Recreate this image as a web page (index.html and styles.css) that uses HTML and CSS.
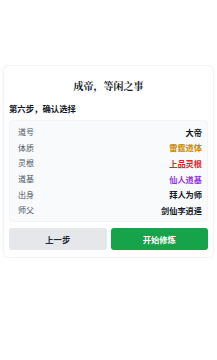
FILE: index.html
```html
<!DOCTYPE html>
<html>
<head>
    <meta charset="utf-8">
    <title>成帝，等闲之事</title>
    <link rel="stylesheet" href="styles.css">
</head>
<body>
    <div class="card">
        <h1 class="title">成帝，等闲之事</h1>
        <h2 class="step">第六步，确认选择</h2>

        <div class="summary">
            <div class="row"><span class="label">道号</span><span class="value">大帝</span></div>
            <div class="row"><span class="label">体质</span><span class="value gold">雷霆道体</span></div>
            <div class="row"><span class="label">灵根</span><span class="value red">上品灵根</span></div>
            <div class="row"><span class="label">道基</span><span class="value purple">仙人道基</span></div>
            <div class="row"><span class="label">出身</span><span class="value">拜人为师</span></div>
            <div class="row"><span class="label">师父</span><span class="value">剑仙李逍遥</span></div>
        </div>

        <div class="actions">
            <button class="btn btn-back">上一步</button>
            <button class="btn btn-start">开始修炼</button>
        </div>
    </div>
</body>
</html>
```

FILE: styles.css
```css
body {
    margin: 0;
    background: #ffffff;
    font-family: "Noto Sans CJK SC", "Noto Sans", sans-serif;
    color: #111827;
}
.card {
    margin: 65px 3px 0;
    padding: 7px 5px 7px;
    background: #fff;
    border: 1px solid #f3f4f6;
    border-radius: 6px;
    box-shadow: 0 1px 3px rgba(0,0,0,0.04);
}
.title {
    margin: 6px 0 9px;
    text-align: center;
    font-family: "Noto Serif CJK SC", "Noto Sans CJK SC", serif;
    font-size: 10px;
    line-height: 14px;
    font-weight: bold;
}
.step {
    margin: 0 0 6px;
    font-size: 8.4px;
    line-height: 12px;
    font-weight: bold;
}
.summary {
    background: #f9fafb;
    border: 1px solid #f3f4f6;
    border-radius: 4px;
    padding: 3px 5px 3px 8px;
}
.row {
    display: flex;
    justify-content: space-between;
    align-items: center;
    height: 15.6px;
}
.label { font-size: 8px; color: #4b5563; }
.value { font-size: 8.2px; font-weight: bold; color: #111827; }
.gold { color: #ca8a04; }
.red { color: #dc2626; }
.purple { color: #9333ea; }
.actions {
    display: flex;
    gap: 4px;
    margin-top: 6px;
}
.btn {
    flex: 1;
    height: 22px;
    border: none;
    border-radius: 3px;
    font-family: inherit;
    font-size: 8.3px;
    font-weight: bold;
    cursor: pointer;
}
.btn-back { background: #e5e7eb; color: #1f2937; }
.btn-start { background: #16a34a; color: #fff; }
```
